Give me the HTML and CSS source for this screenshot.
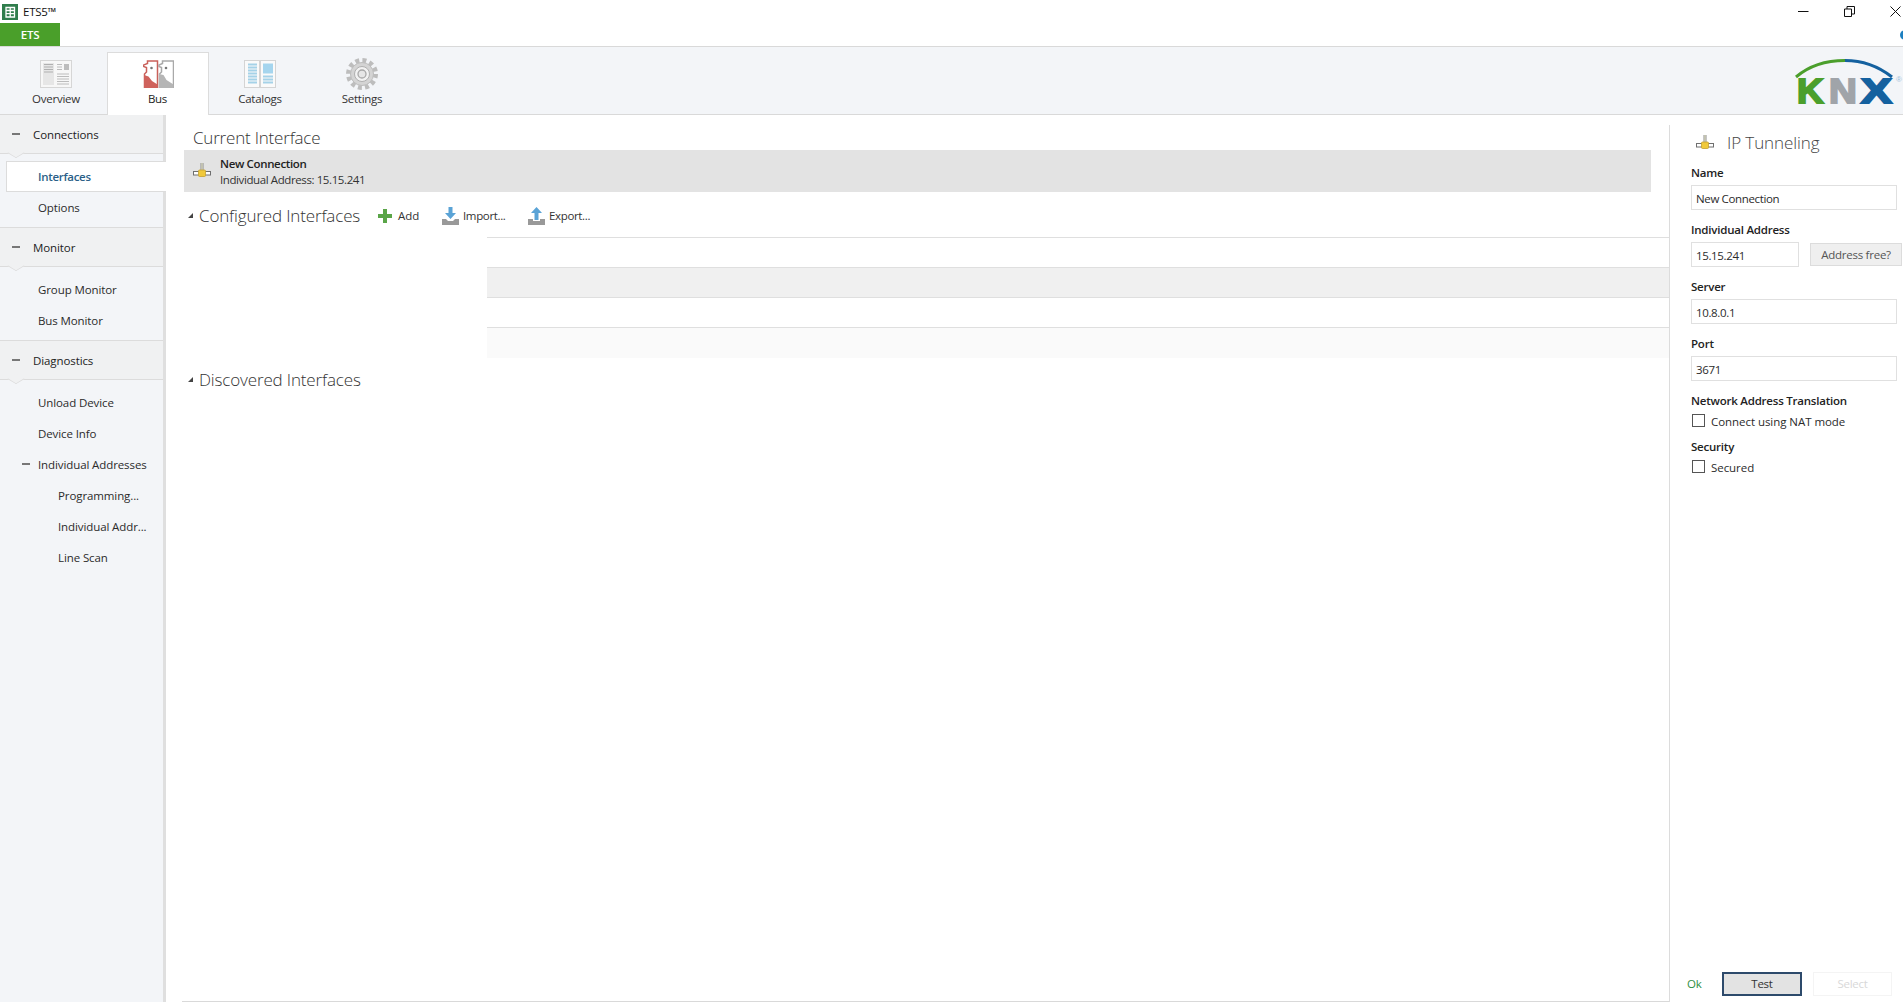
FILE: index.html
```html
<!DOCTYPE html>
<html lang="en">
<head>
<meta charset="utf-8">
<title>ETS5</title>
<link rel="stylesheet" href="styles.css">
</head>
<body>
<svg class="defs" width="0" height="0" aria-hidden="true">
  <symbol id="conn" viewBox="0 0 18 18">
    <rect x="7.5" y="1" width="3" height="9" fill="#8d8d8d"/>
    <rect x="8.3" y="1" width="1.4" height="8" fill="#d9d9c0"/>
    <rect x="0.5" y="9.5" width="17" height="3.5" fill="#fff" stroke="#6f6f6f"/>
    <rect x="5.5" y="8" width="7" height="6.5" rx="1" fill="#f0c93c" stroke="#c4a030" stroke-width=".8"/>
  </symbol>
</svg>
<header class="titlebar">
  <div class="title">
    <svg class="app-icon" width="16" height="16" viewBox="0 0 16 16"><rect width="16" height="16" fill="#2f7d4c"/><path d="M4 3.500h8.500v9.500H4zM4 6.500h8.500M4 9.700h8.500M8.200 3.500v9.500" fill="none" stroke="#fff" stroke-width="1.300"/></svg>
    <span>ETS5™</span>
  </div>
  <div class="winctl">
    <svg width="11" height="11" viewBox="0 0 11 11"><path d="M0 5.500h10.500" stroke="#111" stroke-width="1"/></svg>
    <svg width="11" height="11" viewBox="0 0 11 11"><path d="M.5 3h7v7.500h-7zM3 3V.5h7.500V8H7.500" fill="none" stroke="#111" stroke-width="1"/></svg>
    <svg width="11" height="11" viewBox="0 0 11 11"><path d="M.5.500l10 10M10.500.500l-10 10" stroke="#111" stroke-width="1"/></svg>
  </div>
</header>
<div class="apptabs">
  <div class="ets-tab">ETS</div>
  <div class="status-dot"></div>
</div>
<nav class="ribbon">
  <div class="tab">
    <svg width="32" height="28" viewBox="0 0 32 28"><rect x=".5" y=".5" width="31" height="27" fill="#f7f7f7" stroke="#d6d6d6"/><rect x="3" y="3" width="11" height="22" fill="#e6e6e6"/><path d="M4 4.500h9M4 7h9M4 9.500h9M4 12h9" stroke="#b0b0b0"/><path d="M17 4.500h5M17 7h5M17 9.500h5M17 14h12M17 16.500h12M17 19h12M17 21.500h12M17 24h12" stroke="#bcbcbc"/><rect x="24" y="4" width="5" height="6" fill="#bdbdbd"/></svg>
    <span>Overview</span>
  </div>
  <div class="tab active">
    <svg width="31" height="28" viewBox="0 0 31 28">
      <path d="M4.500 1H14.500V27.500H1.500V14L3.500 12V7.500L.5 6.500V5L4.500 3.500z" fill="#fff" stroke="#c9605a" stroke-width="1.500"/>
      <path d="M1 15L5.500 16.500L9 21L14.500 24.500V28H1z" fill="#cf625c"/>
      <path d="M19.500 1H30.500V27.500H16.500V14L18.500 12V7.500L16 6.500V5L19.500 3.500z" fill="#fff" stroke="#a9a9a9" stroke-width="1.500"/>
      <path d="M16 14L20.500 15L23.500 20L30.500 24.500V28H16z" fill="#b5b5b5"/>
      <circle cx="8.500" cy="8" r="1.300" fill="#777"/><circle cx="23" cy="8" r="1.300" fill="#777"/>
    </svg>
    <span>Bus</span>
  </div>
  <div class="tab">
    <svg width="32" height="28" viewBox="0 0 32 28"><rect x=".5" y=".5" width="15" height="27" fill="#fafafa" stroke="#d4d4d4"/><rect x="16.500" y=".5" width="15" height="27" fill="#fafafa" stroke="#d4d4d4"/><path d="M4 4.500h9M4 7.500h9M4 10.500h9M4 13.500h9M4 16.500h9M4 19.500h9M4 22.500h9" stroke="#a5d2e8" stroke-width="2"/><rect x="19" y="3.500" width="10" height="10" fill="#a5d5ee"/><path d="M19 16.500h10M19 19.500h10M19 22.500h10" stroke="#a5d2e8" stroke-width="2"/></svg>
    <span>Catalogs</span>
  </div>
  <div class="tab">
    <svg width="32" height="32" viewBox="0 0 32 32" class="gear"><circle cx="16" cy="16" r="13.500" fill="none" stroke="#bdbdbd" stroke-width="5" stroke-dasharray="3.900 3.170"/><circle cx="16" cy="16" r="11.500" fill="#d4d4d4" stroke="#bdbdbd"/><circle cx="16" cy="16" r="7.500" fill="#f2f2f2" stroke="#b0b0b0"/><circle cx="16" cy="16" r="4" fill="#e6e6e6" stroke="#a8a8a8" stroke-width="1.300"/></svg>
    <span>Settings</span>
  </div>
  <svg class="knx" width="113" height="50" viewBox="0 0 113 50">
    <path d="M6 19C20 7 36 2.500 55 2.500" fill="none" stroke="#4b9f2c" stroke-width="3"/>
    <path d="M55 2.500C72 2.500 88 8 102 19" fill="none" stroke="#14619f" stroke-width="3"/>
    <text transform="translate(7 45) scale(1.05 1)" class="knx-l k">K</text>
    <text transform="translate(39 45) scale(1.1 1)" class="knx-l n">N</text>
    <text transform="translate(71 45) scale(1.32 1)" class="knx-l x">X</text>
    <text x="106" y="24" class="knx-r">®</text>
  </svg>
</nav>
<div class="body">
  <aside class="sidebar">
    <section class="sec">
      <div class="sec-head"><i class="minus"></i>Connections</div>
      <ul class="items">
        <li class="selected">Interfaces</li>
        <li>Options</li>
      </ul>
    </section>
    <section class="sec">
      <div class="sec-head"><i class="minus"></i>Monitor</div>
      <ul class="items">
        <li>Group Monitor</li>
        <li>Bus Monitor</li>
      </ul>
    </section>
    <section class="sec last">
      <div class="sec-head"><i class="minus"></i>Diagnostics</div>
      <ul class="items">
        <li>Unload Device</li>
        <li>Device Info</li>
        <li class="has-minus"><i class="minus small"></i>Individual Addresses</li>
        <li class="sub">Programming...</li>
        <li class="sub">Individual Addr...</li>
        <li class="sub">Line Scan</li>
      </ul>
    </section>
  </aside>
  <main class="main">
    <div class="main-inner">
      <h2 class="h-current">Current Interface</h2>
      <div class="current">
        <svg class="conn-icon" width="18" height="18"><use href="#conn"/></svg>
        <div>
          <div class="cur-name">New Connection</div>
          <div class="cur-addr">Individual Address: 15.15.241</div>
        </div>
      </div>
      <div class="toolbar">
        <i class="tri"></i>
        <h2 class="h-sec">Configured Interfaces</h2>
        <span class="tool t-add">
          <svg width="14" height="14" viewBox="0 0 14 14"><path d="M5 0h4v5h5v4H9v5H5V9H0V5h5z" fill="#5aa548"/></svg>Add
        </span>
        <span class="tool t-imp">
          <svg width="17" height="18" viewBox="0 0 17 18"><path d="M6.500 0h4v6h3.500l-5.500 6-5.500-6h3.500z" fill="#5aa3d6"/><path d="M0 12h4l2 2h5l2-2h4v6H0z" fill="#999"/></svg>Import...
        </span>
        <span class="tool t-exp">
          <svg width="17" height="18" viewBox="0 0 17 18"><path d="M8.500 0l5.500 6h-3.500v7h-4V6H3z" fill="#5aa3d6"/><path d="M0 12h5v2h7v-2h5v6H0z" fill="#999"/></svg>Export...
        </span>
      </div>
      <div class="table">
        <div class="row"></div>
        <div class="row alt"></div>
        <div class="row"></div>
        <div class="row alt2"></div>
      </div>
      <div class="toolbar disc">
        <i class="tri"></i>
        <h2 class="h-sec">Discovered Interfaces</h2>
      </div>
    </div>
  </main>
  <aside class="panel">
    <div class="panel-head">
      <svg width="18" height="18"><use href="#conn"/></svg>
      <h2>IP Tunneling</h2>
    </div>
    <div class="field">
      <label>Name</label>
      <div class="input">New Connection</div>
    </div>
    <div class="field">
      <label>Individual Address</label>
      <div class="inline">
        <div class="input short">15.15.241</div>
        <div class="btn-free">Address free?</div>
      </div>
    </div>
    <div class="field">
      <label>Server</label>
      <div class="input">10.8.0.1</div>
    </div>
    <div class="field">
      <label>Port</label>
      <div class="input">3671</div>
    </div>
    <div class="group">
      <label>Network Address Translation</label>
      <div class="check"><i class="box"></i>Connect using NAT mode</div>
    </div>
    <div class="group">
      <label>Security</label>
      <div class="check"><i class="box"></i>Secured</div>
    </div>
    <div class="footer">
      <span class="ok">Ok</span>
      <div class="btn-test">Test</div>
      <div class="btn-select">Select</div>
    </div>
  </aside>
</div>
</body>
</html>
```
FILE: styles.css
```css
* { box-sizing: border-box; }
html, body { margin: 0; height: 100%; overflow: hidden; }
body {
  font-family: "Open Sans", "Noto Sans", sans-serif;
  font-size: 11.5px;
  letter-spacing: -0.25px;
  color: #222;
  background: #fff;
  display: flex;
  flex-direction: column;
  height: 1002px;
}
.defs { position: absolute; }
h2 { margin: 0; font-weight: 300; }
ul { list-style: none; margin: 0; padding: 0; }

.titlebar { height: 23px; display: flex; align-items: center; justify-content: space-between; flex: none; }
.title { display: flex; align-items: center; padding-left: 2px; gap: 5px; color: #111; }
.app-icon { display: block; }
.winctl { display: flex; gap: 35px; padding-right: 2px; align-items: center; }
.winctl svg { display: block; }

.apptabs { height: 24px; flex: none; display: flex; border-bottom: 1px solid #d9d9d9; overflow: hidden; justify-content: space-between; align-items: center; }
.ets-tab { width: 60px; height: 23px; align-self: flex-start; background: #4a9f2a; color: #fff; font-weight: 600; text-align: center; line-height: 24px; }
.status-dot { width: 10px; height: 10px; border-radius: 50%; background: #1c7fc0; margin-right: -7px; }

.ribbon { height: 68px; flex: none; background: #f3f5f8; border-bottom: 1px solid #d9d9d9; display: flex; padding: 5px 0 0 5px; position: relative; z-index: 2; }
.tab { width: 102px; height: 63px; display: flex; flex-direction: column; align-items: center; color: #333; padding-top: 8px; position: relative; }
.tab svg { display: block; }
.tab span { position: absolute; top: 39px; left: 0; right: 0; text-align: center; line-height: 16px; }
.tab .gear { margin-top: -2px; }
.tab.active { width: 102px; background: #fff; border: 1px solid #dcdcdc; border-bottom: 0; padding-top: 7px; }
.tab.active span { top: 38px; color: #222; left: -1px; }
.knx { margin: 6px 0 0 auto; display: block; overflow: visible; }
.knx-l { font-family: "Liberation Sans", sans-serif; font-weight: 700; font-size: 35px; letter-spacing: 0; stroke-width: 2px; }
.k { fill: #4b9f2c; stroke: #4b9f2c; }
.n { fill: #a0a4a9; stroke: #a0a4a9; }
.x { fill: #14619f; stroke: #14619f; }
.knx-r { font-family: "Liberation Sans", sans-serif; font-size: 8px; fill: #9fc0d8; letter-spacing: 0; }

.body { flex: 1; display: flex; min-height: 0; }

.sidebar { width: 166px; flex: none; background: #f3f5f8; border-right: 3px solid #dfdfdf; letter-spacing: -0.1px; }
.sec { border-bottom: 1px solid #dcdcdc; }
.sec.last { border-bottom: 0; }
.sec-head { height: 39px; background: #f0f1f2; border-bottom: 1px solid #dcdcdc; display: flex; align-items: center; padding-left: 33px; position: relative; color: #222; }
.sec-head::after { content: ""; position: absolute; left: 10px; bottom: -6px; width: 11px; height: 11px; background: #f0f1f2; border-right: 1px solid #dcdcdc; border-bottom: 1px solid #dcdcdc; transform: scaleY(.6) rotate(45deg); }
.minus { position: absolute; left: 12px; top: 18px; width: 8px; height: 2px; background: #777; }
.minus.small { left: 22px; top: 14px; }
.items { padding: 7px 0 4px; }
.items li { height: 31px; line-height: 31px; padding-left: 38px; color: #2b2b2b; position: relative; }
.items li.selected { margin: 0 -3px 0 6px; padding-left: 31px; background: #fff; border: 1px solid #dcdcdc; border-right: 0; line-height: 29px; color: #2b5f88; font-weight: 600; letter-spacing: -0.3px; }
.items li.sub { padding-left: 58px; }

.main { flex: none; width: 1503px; padding: 0 0 0 16px; }
.main-inner { height: 887px; border-bottom: 1px solid #d9d9d9; }
.h-current { font-size: 17px; height: 35px; line-height: 46px; padding-left: 11px; color: #333; letter-spacing: -0.2px; }
.current { height: 42px; width: 1467px; margin-left: 2px; background: #e3e3e3; display: flex; align-items: center; padding-left: 9px; }
.conn-icon { margin-right: 9px; display: block; }
.cur-name { font-weight: 600; line-height: 16px; color: #222; padding-top: 1px; letter-spacing: -0.35px; }
.cur-addr { line-height: 16px; color: #333; letter-spacing: -0.4px; }
.toolbar { height: 45px; display: flex; align-items: center; padding-left: 6px; position: relative; top: 1px; }
.tri { width: 0; height: 0; border-left: 5px solid transparent; border-bottom: 5px solid #444; margin-right: 6px; flex: none; }
.h-sec { font-size: 17px; color: #333; letter-spacing: -0.15px; width: 179px; flex: none; white-space: nowrap; }
.tool { display: flex; align-items: center; color: #333; flex: none; }
.t-add { gap: 6px; width: 64px; letter-spacing: 0; }
.t-imp { gap: 4px; width: 86px; letter-spacing: -0.35px; }
.t-exp { gap: 4px; letter-spacing: -0.35px; }
.table { margin-left: 305px; border-top: 1px solid #dfdfdf; }
.row { height: 30px; border-bottom: 1px solid #dfdfdf; }
.row.alt { background: #f0f0f0; }
.row.alt2 { background: #fafafa; border-bottom: 0; }
.disc { height: 41px; }

.panel { flex: 1; margin-top: 10px; border-left: 1px solid #dcdcdc; padding: 0 1px 0 21px; display: flex; flex-direction: column; min-width: 0; }
.panel-head { height: 36px; display: flex; align-items: center; padding-left: 5px; gap: 12px; padding-bottom: 1px; }
.panel-head svg { display: block; }
.panel-head h2 { font-size: 17px; letter-spacing: -0.1px; color: #444; padding-left: 1px; }
label { display: block; font-weight: 600; height: 24px; line-height: 24px; color: #222; letter-spacing: -0.22px; }
.field { height: 57px; }
.input { width: 206px; height: 25px; border: 1px solid #e0e0e0; line-height: 25px; padding-left: 4px; color: #2b2b2b; background: #fff; letter-spacing: -0.35px; }
.inline { display: flex; gap: 11px; align-items: center; }
.input.short { width: 108px; }
.btn-free { width: 92px; height: 23px; border: 1px solid #dcdcdc; background: #efefef; color: #555; text-align: center; line-height: 22px; }
.group { height: 46px; }
.check { display: flex; align-items: center; height: 16px; color: #2b2b2b; padding-left: 1px; gap: 6px; letter-spacing: -0.05px; }
.box { width: 13px; height: 13px; border: 1px solid #555; flex: none; background: #fff; position: relative; top: -1px; }
.footer { margin: auto 0 6px -4px; display: flex; align-items: center; gap: 11px; height: 24px; }
.ok { width: 24px; color: #2f8f3f; padding-bottom: 2px; }
.btn-test { width: 80px; height: 24px; border: 2px solid #2d4a6b; background: #e3e3e3; text-align: center; line-height: 20px; color: #333; }
.btn-select { width: 79px; height: 24px; border: 1px solid #f4f4f4; text-align: center; line-height: 22px; color: #d8d8d8; }
```
